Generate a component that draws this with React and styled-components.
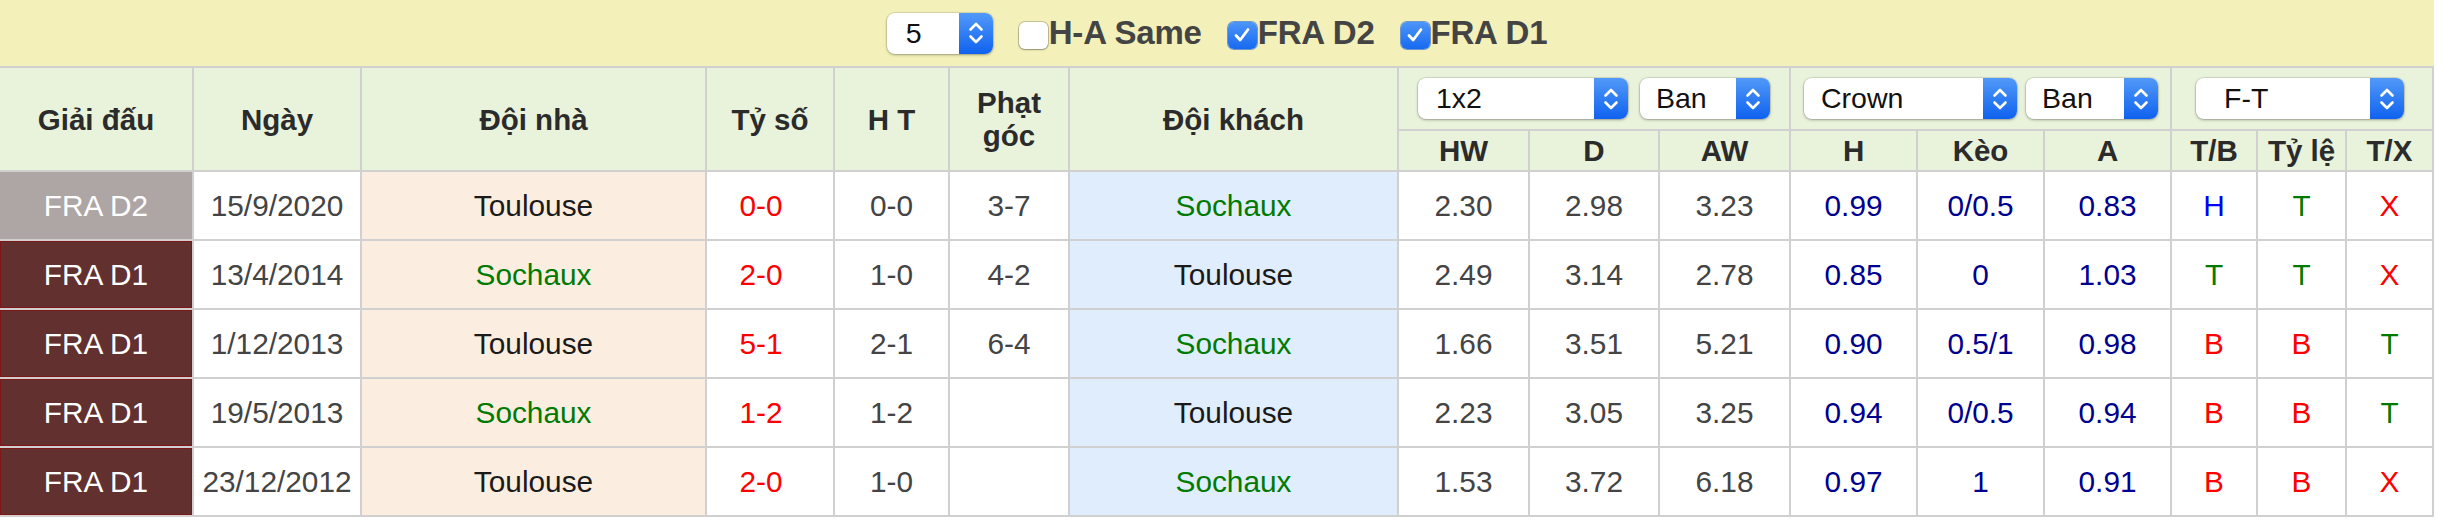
import React from 'react';
import styled, { createGlobalStyle } from 'styled-components';

const GlobalStyle = createGlobalStyle`
  html, body { margin: 0; padding: 0; background: #fff; }
  body { font-family: "Liberation Sans", Arial, Helvetica, sans-serif; }
  *, *::before, *::after { box-sizing: border-box; }
`;

const GRID = '#d0d0d0';

const Page = styled.div`
  width: 2434px;
`;

const Toolbar = styled.div`
  height: 66px;
  background: #f3f0b9;
  display: flex;
  align-items: center;
  justify-content: center;
  gap: 26px;
`;

const CheckLabel = styled.label`
  display: inline-flex;
  align-items: center;
  font-weight: 700;
  font-size: 33px;
  color: #444;
  letter-spacing: -0.2px;
`;

const Box = styled.span`
  width: 29px;
  height: 27px;
  margin-top: 4px;
  margin-right: 1px;
  border-radius: 6px;
  display: inline-flex;
  align-items: center;
  justify-content: center;
  background: ${p => (p.$checked ? 'linear-gradient(#4d95f8, #176af1)' : '#fff')};
  box-shadow: ${p =>
    p.$checked
      ? '0 0 0 1px rgba(20,90,220,0.6)'
      : '0 0 0 1px rgba(0,0,0,0.18), 0 1px 2px rgba(0,0,0,0.25)'};
`;

const SelectBox = styled.div`
  display: flex;
  flex: none;
  width: ${p => p.$w}px;
  height: 41px;
  border-radius: 8px;
  background: #fff;
  overflow: hidden;
  box-shadow: 0 0 0 1px rgba(0, 0, 0, 0.08), 0 1px 3px rgba(0, 0, 0, 0.3);
`;

const SelectValue = styled.span`
  flex: 1;
  display: flex;
  align-items: center;
  padding-left: ${p => p.$pl || 18}px;
  font-weight: 400;
  font-size: 28.5px;
  color: #111;
  white-space: nowrap;
`;

const SelectArrows = styled.span`
  width: 34px;
  flex: none;
  display: flex;
  align-items: center;
  justify-content: center;
  background: linear-gradient(#5199f8, #0f62ef);
`;

const Table = styled.table`
  width: 2434px;
  table-layout: fixed;
  border-collapse: separate;
  border-spacing: 0;
  border-top: 2px solid ${GRID};
`;

const Col = styled.col`
  width: ${p => p.$w}px;
`;

const Th = styled.th`
  background: #e9f2db;
  border-right: 2px solid ${GRID};
  border-bottom: 2px solid ${GRID};
  color: #2b2b2b;
  font-weight: 700;
  font-size: 29.5px;
  line-height: 33px;
  text-align: center;
  vertical-align: middle;
  padding: 0;
  height: ${p => p.$h || 'auto'};
`;

const SelectCell = styled(Th)`
  padding: 0 ${p => p.$pr}px 0 ${p => p.$pl}px;
`;

const SelectRow = styled.div`
  display: flex;
  align-items: center;
  gap: ${p => p.$gap}px;
`;

const Td = styled.td`
  height: 69px;
  padding: 0 ${p => p.$pr || 0}px 0 0;
  border-right: 2px solid ${GRID};
  border-bottom: 2px solid ${GRID};
  background: ${p => p.$bg || '#fff'};
  color: ${p => p.$color || '#444'};
  font-size: 29.8px;
  text-align: center;
  vertical-align: middle;
  white-space: nowrap;
`;

const LeagueTd = styled(Td)`
  background: ${p => (p.$d2 ? '#aea5a5' : '#633030')};
  color: #fff;
  box-shadow: ${p => (p.$d2 ? 'none' : 'inset 0 0 0 1px #7e1818')};
`;

const Chevrons = () => (
  <svg width="16" height="24" viewBox="0 0 16 24">
    <path d="M2.5 8.5 L8 3 L13.5 8.5 M2.5 15.5 L8 21 L13.5 15.5" fill="none" stroke="#fff" strokeWidth="2.6" strokeLinecap="round" strokeLinejoin="round" />
  </svg>
);

const Select = ({ w, value, pl }) => (
  <SelectBox $w={w}>
    <SelectValue $pl={pl}>{value}</SelectValue>
    <SelectArrows>
      <Chevrons />
    </SelectArrows>
  </SelectBox>
);

const Check = ({ checked, children }) => (
  <CheckLabel>
    <Box $checked={checked}>
      {checked && (
        <svg width="20" height="20" viewBox="0 0 20 20">
          <path d="M4 10.5 L8.2 15 L16 4.5" fill="none" stroke="#fff" strokeWidth="2.8" strokeLinecap="round" strokeLinejoin="round" />
        </svg>
      )}
    </Box>
    {children}
  </CheckLabel>
);

const widths = [194, 168, 345, 128, 115, 120, 329, 131, 130, 131, 127, 127, 127, 86, 89, 87];

const TEAM = { Toulouse: '#1a1a1a', Sochaux: '#007a00' };
const RES = { H: '#0000ff', T: '#007a00', B: '#ff0000', X: '#ff0000' };
const ODDS = '#000090';

const rows = [
  ['FRA D2', '15/9/2020', 'Toulouse', '0-0', '0-0', '3-7', 'Sochaux', '2.30', '2.98', '3.23', '0.99', '0/0.5', '0.83', 'H', 'T', 'X'],
  ['FRA D1', '13/4/2014', 'Sochaux', '2-0', '1-0', '4-2', 'Toulouse', '2.49', '3.14', '2.78', '0.85', '0', '1.03', 'T', 'T', 'X'],
  ['FRA D1', '1/12/2013', 'Toulouse', '5-1', '2-1', '6-4', 'Sochaux', '1.66', '3.51', '5.21', '0.90', '0.5/1', '0.98', 'B', 'B', 'T'],
  ['FRA D1', '19/5/2013', 'Sochaux', '1-2', '1-2', '', 'Toulouse', '2.23', '3.05', '3.25', '0.94', '0/0.5', '0.94', 'B', 'B', 'T'],
  ['FRA D1', '23/12/2012', 'Toulouse', '2-0', '1-0', '', 'Sochaux', '1.53', '3.72', '6.18', '0.97', '1', '0.91', 'B', 'B', 'X'],
];

export default function App() {
  return (
    <Page>
      <GlobalStyle />
      <Toolbar>
        <Select w={106} value="5" pl={19} />
        <Check>H-A Same</Check>
        <Check checked>FRA D2</Check>
        <Check checked>FRA D1</Check>
      </Toolbar>
      <Table>
        <colgroup>
          {widths.map((w, i) => (
            <Col key={i} $w={w} />
          ))}
        </colgroup>
        <thead>
          <tr>
            <Th rowSpan={2} $h="63px">Giải đấu</Th>
            <Th rowSpan={2}>Ngày</Th>
            <Th rowSpan={2}>Đội nhà</Th>
            <Th rowSpan={2}>Tỷ số</Th>
            <Th rowSpan={2}>H T</Th>
            <Th rowSpan={2}>
              Phạt
              <br />
              góc
            </Th>
            <Th rowSpan={2}>Đội khách</Th>
            <SelectCell colSpan={3} $h="63px" $pl={19} $pr={19}>
              <SelectRow $gap={12}>
                <Select w={210} value="1x2" />
                <Select w={130} value="Ban" pl={16} />
              </SelectRow>
            </SelectCell>
            <SelectCell colSpan={3} $pl={13} $pr={12}>
              <SelectRow $gap={9}>
                <Select w={213} value="Crown" pl={17} />
                <Select w={132} value="Ban" pl={16} />
              </SelectRow>
            </SelectCell>
            <SelectCell colSpan={3} $pl={24} $pr={26}>
              <SelectRow $gap={0}>
                <Select w={208} value="F-T" pl={28} />
              </SelectRow>
            </SelectCell>
          </tr>
          <tr>
            {['HW', 'D', 'AW', 'H', 'Kèo', 'A', 'T/B', 'Tỷ lệ', 'T/X'].map(h => (
              <Th key={h} $h="41px">{h}</Th>
            ))}
          </tr>
        </thead>
        <tbody>
          {rows.map((r, i) => (
            <tr key={i}>
              <LeagueTd $d2={r[0] === 'FRA D2'}>{r[0]}</LeagueTd>
              <Td>{r[1]}</Td>
              <Td $bg="#fbeee0" $color={TEAM[r[2]]}>{r[2]}</Td>
              <Td $color="#ff0000" $pr={18}>{r[3]}</Td>
              <Td>{r[4]}</Td>
              <Td>{r[5]}</Td>
              <Td $bg="#e0edfc" $color={TEAM[r[6]]}>{r[6]}</Td>
              <Td>{r[7]}</Td>
              <Td>{r[8]}</Td>
              <Td>{r[9]}</Td>
              <Td $color={ODDS}>{r[10]}</Td>
              <Td $color={ODDS}>{r[11]}</Td>
              <Td $color={ODDS}>{r[12]}</Td>
              <Td $color={RES[r[13]]}>{r[13]}</Td>
              <Td $color={RES[r[14]]}>{r[14]}</Td>
              <Td $color={RES[r[15]]}>{r[15]}</Td>
            </tr>
          ))}
        </tbody>
      </Table>
    </Page>
  );
}
